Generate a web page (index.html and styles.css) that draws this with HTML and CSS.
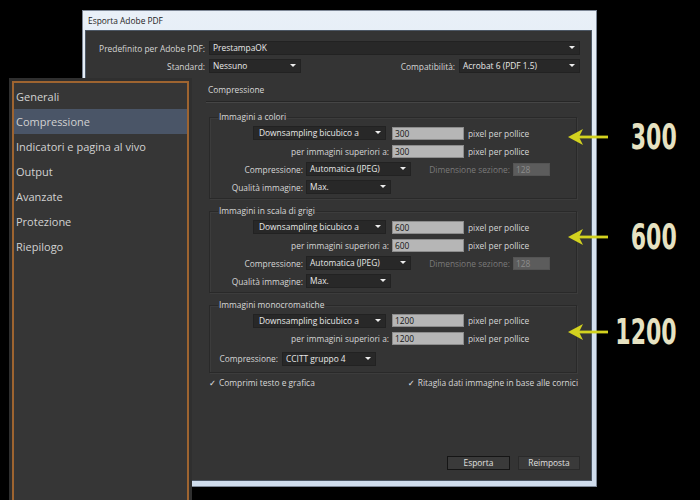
FILE: index.html
```html
<!DOCTYPE html>
<html lang="it">
<head>
    <meta charset="UTF-8">
    <title>Esporta Adobe PDF</title>
    <link rel="stylesheet" href="styles.css">
</head>
<body>
    <div class="window">
        <div class="titlebar">Esporta Adobe PDF</div>
        <div class="dialog">
            <div class="row top-row">
                <span class="lbl lbl-main">Predefinito per Adobe PDF:</span>
                <span class="select sel-preset">PrestampaOK</span>
            </div>
            <div class="row top-row">
                <span class="lbl lbl-main">Standard:</span>
                <span class="select sel-standard">Nessuno</span>
                <span class="lbl lbl-compat">Compatibilità:</span>
                <span class="select sel-compat">Acrobat 6 (PDF 1.5)</span>
            </div>

            <div class="section">
                <div class="section-title">Compressione</div>

                <fieldset class="group">
                    <legend>Immagini a colori</legend>
                    <div class="row">
                        <span class="select sel-method">Downsampling bicubico a</span>
                        <span class="field">300</span>
                        <span class="unit">pixel per pollice</span>
                    </div>
                    <div class="row">
                        <span class="lbl lbl-above">per immagini superiori a:</span>
                        <span class="field">300</span>
                        <span class="unit">pixel per pollice</span>
                    </div>
                    <div class="row">
                        <span class="lbl lbl-short">Compressione:</span>
                        <span class="select sel-comp">Automatica (JPEG)</span>
                        <span class="lbl lbl-tile">Dimensione sezione:</span>
                        <span class="field field-off">128</span>
                    </div>
                    <div class="row">
                        <span class="lbl lbl-short">Qualità immagine:</span>
                        <span class="select sel-quality">Max.</span>
                    </div>
                </fieldset>

                <fieldset class="group">
                    <legend>Immagini in scala di grigi</legend>
                    <div class="row">
                        <span class="select sel-method">Downsampling bicubico a</span>
                        <span class="field">600</span>
                        <span class="unit">pixel per pollice</span>
                    </div>
                    <div class="row">
                        <span class="lbl lbl-above">per immagini superiori a:</span>
                        <span class="field">600</span>
                        <span class="unit">pixel per pollice</span>
                    </div>
                    <div class="row">
                        <span class="lbl lbl-short">Compressione:</span>
                        <span class="select sel-comp">Automatica (JPEG)</span>
                        <span class="lbl lbl-tile">Dimensione sezione:</span>
                        <span class="field field-off">128</span>
                    </div>
                    <div class="row">
                        <span class="lbl lbl-short">Qualità immagine:</span>
                        <span class="select sel-quality">Max.</span>
                    </div>
                </fieldset>

                <fieldset class="group group-mono">
                    <legend>Immagini monocromatiche</legend>
                    <div class="row">
                        <span class="select sel-method">Downsampling bicubico a</span>
                        <span class="field">1200</span>
                        <span class="unit">pixel per pollice</span>
                    </div>
                    <div class="row">
                        <span class="lbl lbl-above">per immagini superiori a:</span>
                        <span class="field">1200</span>
                        <span class="unit">pixel per pollice</span>
                    </div>
                    <div class="row row-mono">
                        <span class="lbl lbl-mono">Compressione:</span>
                        <span class="select sel-ccitt">CCITT gruppo 4</span>
                    </div>
                </fieldset>

                <div class="checks">
                    <span class="check">Comprimi testo e grafica</span>
                    <span class="check">Ritaglia dati immagine in base alle cornici</span>
                </div>
            </div>

            <div class="buttons">
                <span class="btn btn-default">Esporta</span>
                <span class="btn">Reimposta</span>
            </div>
        </div>
    </div>

    <!-- pannello categorie sovrapposto -->
    <div class="sidebar">
        <ul class="sidebar-list">
            <li>Generali</li>
            <li class="active">Compressione</li>
            <li>Indicatori e pagina al vivo</li>
            <li>Output</li>
            <li>Avanzate</li>
            <li>Protezione</li>
            <li>Riepilogo</li>
        </ul>
    </div>

    <!-- frecce con le risoluzioni -->
    <div class="notes">
        <div class="note">
            <svg class="arrow" width="40" height="16" viewBox="0 0 40 16"><polygon points="0,8 15,0 11,8 15,16"/><rect x="10" y="6.6" width="30" height="2.8"/></svg>
            <span class="num"><span>300</span></span>
        </div>
        <div class="note note-2">
            <svg class="arrow" width="40" height="16" viewBox="0 0 40 16"><polygon points="0,8 15,0 11,8 15,16"/><rect x="10" y="6.6" width="30" height="2.8"/></svg>
            <span class="num"><span>600</span></span>
        </div>
        <div class="note note-3">
            <svg class="arrow" width="40" height="16" viewBox="0 0 40 16"><polygon points="0,8 15,0 11,8 15,16"/><rect x="10" y="6.6" width="30" height="2.8"/></svg>
            <span class="num"><span>1200</span></span>
        </div>
    </div>
</body>
</html>
```

FILE: styles.css
```css
body {
    margin: 0;
    background: #000;
    font-family: "Open Sans", "Noto Sans", sans-serif;
    font-size: 8.4px;
    color: #d8d8d8;
    width: 700px;
    height: 500px;
    overflow: hidden;
    position: relative;
}

/* finestra */
.window {
    margin: 10px 0 0 82px;
    width: 515px;
    box-sizing: border-box;
    border: 1px solid #7d8796;
    background: linear-gradient(180deg, #e9f0f8 0%, #d7e3f0 40%, #cfdcec 100%);
    padding: 0 4px 5px 2px;
}
.titlebar {
    height: 19px;
    line-height: 19px;
    padding-left: 3px;
    color: #1e1e1e;
    font-size: 8.4px;
}
.dialog {
    height: 451px;
    box-sizing: border-box;
    background: #343434;
    border: 1px solid #4d5866;
    padding: 8px 11px 10px 0;
    display: flex;
    flex-direction: column;
}

.row {
    display: flex;
    align-items: center;
    height: 18px;
}
.lbl {
    text-align: right;
    white-space: nowrap;
    color: #d6d6d6;
}
.lbl-main { width: 119px; margin-right: 4px; }
.lbl-compat { margin-left: auto; margin-right: 4px; }

/* menu a tendina */
.select {
    position: relative;
    height: 14px;
    line-height: 12px;
    box-sizing: border-box;
    padding-left: 3px;
    background: #282828;
    border: 1px solid #222;
    color: #e8e8e8;
    white-space: nowrap;
}
.select::after {
    content: "";
    position: absolute;
    right: 4px;
    top: 4px;
    border-left: 3px solid transparent;
    border-right: 3px solid transparent;
    border-top: 3px solid #eee;
}
.sel-preset { width: 371px; }
.sel-standard { width: 92px; }
.sel-compat { width: 121px; }
.sel-method { width: 133px; margin-left: 43px; margin-right: 6px; padding-left: 5px; }
.sel-comp { width: 105px; }
.sel-quality { width: 85px; }
.sel-ccitt { width: 94px; }

/* campi numerici */
.field {
    width: 72px;
    height: 13px;
    line-height: 11px;
    box-sizing: border-box;
    padding-left: 2px;
    background: #b6b6b6;
    border: 1px solid #8c8c8c;
    color: #161616;
}
.field-off {
    width: 37px;
    background: #5c5c5c;
    border-color: #545454;
    color: #8c8c8c;
}
.unit { margin-left: 4px; color: #d6d6d6; }

.lbl-above { width: 179px; margin-right: 3px; }
.lbl-short { width: 93px; margin-right: 3px; }
.lbl-tile { width: 84px; margin-left: 15px; margin-right: 3px; color: #7a7a7a; }
.lbl-mono { width: 68px; margin-right: 4px; }

/* sezione compressione */
.section {
    margin-left: 120px;
    margin-top: 8px;
}
.section-title {
    line-height: 14px;
    padding: 0 0 4px 2px;
    border-bottom: 1px solid #262626;
    box-shadow: 0 1px 0 #454545;
    color: #d8d8d8;
}
.group {
    margin: 8px 3px 0;
    padding: 0 0 2px;
    border: 1px solid #292929;
    box-shadow: inset 1px 1px 0 #3c3c3c, 1px 1px 0 #3c3c3c;
}
.group legend {
    margin-left: 8px;
    padding: 0 1px;
    line-height: 14px;
    color: #d8d8d8;
}
.group + .group { margin-top: 5px; }
.group-mono { padding-bottom: 4px; }
.group-mono .row { height: 17.5px; }
.row-mono { margin-top: 3px; }

.checks {
    display: flex;
    justify-content: space-between;
    align-items: center;
    height: 20px;
    padding: 0 2px 0 3px;
}
.check::before {
    content: "\2713";
    font-family: "DejaVu Sans", sans-serif;
    margin-right: 3px;
    color: #e0e0e0;
}

/* pulsanti */
.buttons {
    margin-top: auto;
    display: flex;
    justify-content: flex-end;
    gap: 8px;
}
.btn {
    width: 62px;
    height: 14px;
    line-height: 12px;
    box-sizing: border-box;
    text-align: center;
    background: #3a3a3a;
    border: 1px solid #2a2a2a;
    color: #e0e0e0;
}
.btn-default {
    width: 63px;
    border-color: #151515;
}

/* pannello laterale */
.sidebar {
    position: absolute;
    left: 9px;
    top: 78px;
    width: 183px;
    bottom: 0;
    box-sizing: border-box;
    padding: 3px 3px 0;
    background: #2f2f2f;
}
.sidebar-list {
    list-style: none;
    margin: 0;
    padding: 1px 0 0;
    height: 100%;
    box-sizing: border-box;
    background: #363636;
    border: 2px solid #9e6430;
    border-bottom: none;
    font-size: 11px;
}
.sidebar-list li {
    height: 25px;
    line-height: 25px;
    padding-left: 2px;
    color: #d2d2d2;
}
.sidebar-list li.active {
    background: #4a5567;
}

/* annotazioni */
.notes {
    position: absolute;
    left: 568px;
    top: 127px;
}
.note {
    display: flex;
    align-items: center;
    height: 20px;
}
.note-2 { margin-top: 80px; }
.note-3 { margin-top: 75px; }
.arrow { fill: #d3d21f; flex-shrink: 0; }
.num {
    width: 69px;
    display: flex;
    justify-content: flex-end;
    font-family: "DejaVu Sans", sans-serif;
    font-stretch: condensed;
    font-weight: bold;
    font-size: 35px;
    line-height: 20px;
    color: #e6e2c2;
}
.num span {
    flex-shrink: 0;
    white-space: nowrap;
    transform: scaleX(0.7);
    transform-origin: right center;
}
```
